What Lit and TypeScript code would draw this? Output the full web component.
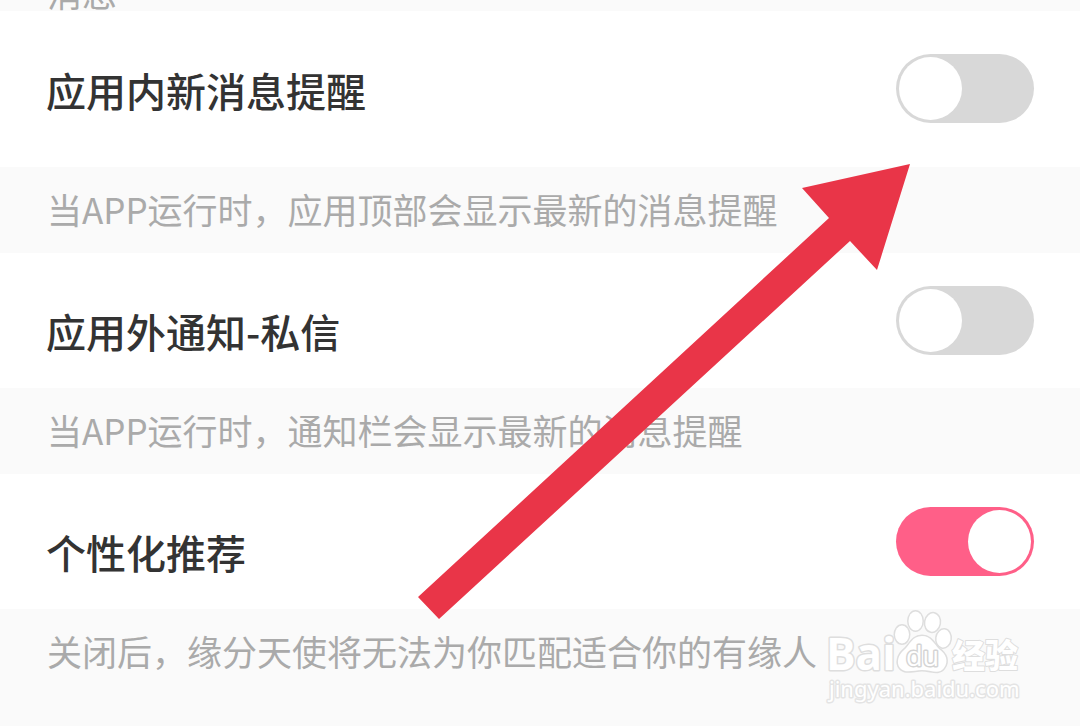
import { LitElement, html, css } from "lit";
import { customElement, property, state } from "lit/decorators.js";

interface Setting {
  id: string;
  title: string;
  note: string;
  on: boolean;
}

@customElement("toggle-switch")
class ToggleSwitch extends LitElement {
  @property({ type: Boolean }) checked = false;
  @property() label = "";

  static styles = css`
    :host {
      display: block;
      flex: none;
    }
    .switch {
      display: flex;
      align-items: center;
      box-sizing: border-box;
      appearance: none;
      width: 138px;
      height: 69px;
      margin: 0;
      padding: 0 3px;
      border-radius: 35px;
      background: #d8d8d8;
      cursor: pointer;
    }
    .switch::before {
      content: "";
      width: 63px;
      height: 63px;
      border-radius: 50%;
      background: #fff;
    }
    .switch:checked {
      justify-content: flex-end;
      background: #ff5f88;
    }
  `;

  private onChange(e: Event) {
    this.checked = (e.target as HTMLInputElement).checked;
  }

  render() {
    return html`<input
      class="switch"
      type="checkbox"
      role="switch"
      aria-label=${this.label}
      .checked=${this.checked}
      @change=${this.onChange}
    />`;
  }
}

@customElement("setting-item")
class SettingItem extends LitElement {
  @property({ attribute: false }) item!: Setting;
  @property({ type: Boolean, reflect: true }) first = false;

  static styles = css`
    :host {
      display: block;
    }
    .row {
      display: flex;
      align-items: flex-start;
      justify-content: space-between;
      gap: 24px;
      padding: 33px 46px;
      background: #fff;
    }
    :host([first]) .row {
      padding-top: 43px;
      padding-bottom: 44px;
    }
    .title {
      margin: 0;
      padding-top: 21px;
      font-size: 40px;
      font-weight: 500;
      line-height: 48px;
      color: #333;
    }
    :host([first]) .title {
      padding-top: 12px;
    }
    .note {
      margin: 0;
      padding: 16px 47px 18px;
      font-size: 35px;
      line-height: 52px;
      color: #aaa;
      background: #fafafa;
    }
  `;

  render() {
    return html`
      <div class="row">
        <h2 class="title">${this.item.title}</h2>
        <toggle-switch .checked=${this.item.on} .label=${this.item.title}></toggle-switch>
      </div>
      <p class="note">${this.item.note}</p>
    `;
  }
}

@customElement("app-root")
class AppRoot extends LitElement {
  @state() private items: Setting[] = [
    { id: "inner", title: "应用内新消息提醒", note: "当APP运行时，应用顶部会显示最新的消息提醒", on: false },
    { id: "outer", title: "应用外通知-私信", note: "当APP运行时，通知栏会显示最新的消息提醒", on: false },
    { id: "recommend", title: "个性化推荐", note: "关闭后，缘分天使将无法为你匹配适合你的有缘人", on: true },
  ];

  static styles = css`
    :host {
      display: block;
      position: relative;
      min-height: 100vh;
      overflow: hidden;
      background: #fafafa;
      font-family: "Noto Sans CJK SC", sans-serif;
    }
    .group {
      display: flex;
      align-items: flex-end;
      height: 11px;
      padding: 0 47px;
      overflow: hidden;
      font-size: 35px;
      line-height: 38px;
      color: #aaa;
    }
    .arrow {
      position: absolute;
      top: 0;
      left: 0;
      width: 100%;
      pointer-events: none;
    }
    .mark {
      position: absolute;
      top: 604px;
      right: 50px;
      width: 210px;
      height: 104px;
      pointer-events: none;
    }
    .ink {
      fill: #fff;
      stroke: #dedede;
      stroke-width: 3px;
      stroke-linejoin: round;
      paint-order: stroke;
    }
    .brand {
      font: 700 44px "Open Sans", sans-serif;
    }
    .du {
      font: 400 27px "Open Sans", sans-serif;
      stroke: #d4d4d4;
    }
    .cjk {
      font: 900 33px "Noto Sans CJK SC", sans-serif;
      stroke-width: 2px;
    }
    .site {
      font: 400 22px "Noto Sans", sans-serif;
      stroke: #e4e4e4;
    }
  `;

  render() {
    return html`
      <div class="group">消息</div>
      <main>
        ${this.items.map(
          (item, i) => html`<setting-item .item=${item} ?first=${i === 0}></setting-item>`
        )}
      </main>
      <svg class="arrow" viewBox="0 0 1080 726" aria-hidden="true">
        <path fill="#e93548" d="M910 164 L802 188 L829 218 L418 597 L439 619 L850 241 L877 270 Z" />
      </svg>
      <svg class="mark" viewBox="0 0 210 104" role="img" aria-label="Baidu 经验">
        <text class="ink brand" x="6" y="66">Bai</text>
        <g class="ink">
          <ellipse cx="82" cy="30.5" rx="7" ry="9" />
          <ellipse cx="95.5" cy="17" rx="7" ry="9.5" />
          <ellipse cx="112.5" cy="18.5" rx="7.2" ry="9.2" transform="rotate(10 112.5 18.5)" />
          <ellipse cx="123.5" cy="34.5" rx="7" ry="9" transform="rotate(8 123.5 34.5)" />
          <path d="M102 32 C92 32 90 41 84 46 C78 51 76 59 80 64 C85 70 94 66 102 66 C111 66 119 71 124 64 C129 57 126 50 119 45 C114 40 111 32 102 32 Z" />
        </g>
        <text class="ink du" x="86" y="62">du</text>
        <text class="ink cjk" x="132" y="64">经验</text>
        <text class="ink site" x="9" y="93">jingyan.baidu.com</text>
      </svg>
    `;
  }
}
